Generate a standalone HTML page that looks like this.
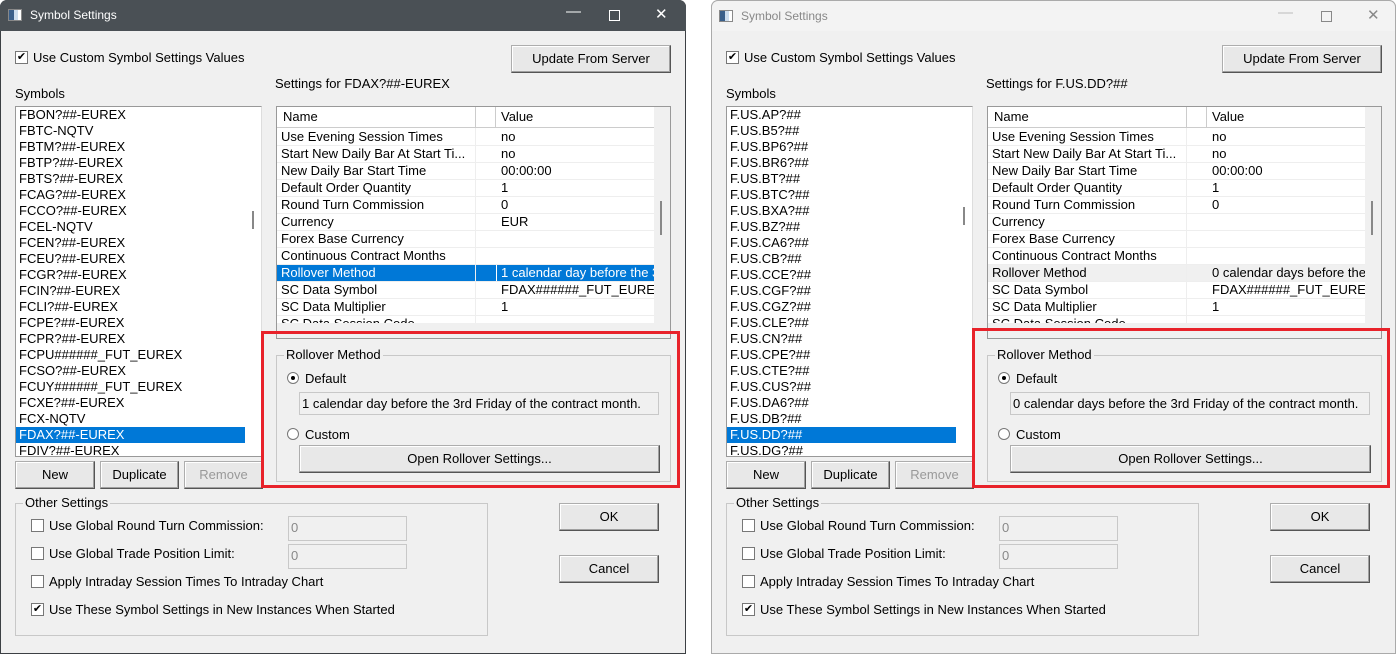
<!DOCTYPE html>
<html><head><meta charset="utf-8"><style>
*{box-sizing:border-box;margin:0;padding:0}
body{width:1396px;height:654px;background:#fff;position:relative;overflow:hidden;font-family:"Liberation Sans",Arial,sans-serif;font-size:13px;color:#000}
.win{position:absolute;top:0;height:654px;background:#f0f0f0;border-radius:7px 7px 0 0;overflow:hidden}
.w1{left:0;width:686px;box-shadow:inset 0 0 0 1px #3c4044}
.w2{left:711px;width:685px;box-shadow:inset 0 0 0 1px #aaa}
.a{position:absolute;white-space:nowrap}
.tb{position:absolute;left:0;top:0;right:0;height:31px}
.w1 .tb{background:#4a5055;color:#fff}
.w2 .tb{background:#f3f3f3;color:#888;border:1px solid #aaa;border-bottom:none;border-radius:7px 7px 0 0}
.tt{position:absolute;left:30px;top:8px;font-size:12px}
.ic{position:absolute;left:8px;top:9px;width:14px;height:12px;border:1px solid #888;background:linear-gradient(90deg,#3a5f8a 0 5px,#cde 5px 9px,#fff 9px)}
.ctl{position:absolute;top:5px;font-size:15px}
.cb{position:absolute;width:13px;height:13px;border:1px solid #777;background:#fff;font-size:11px;line-height:11px;text-align:center}
.btn{position:absolute;border:1px solid #adadad;border-right-color:#555;border-bottom-color:#555;background:#e8e8e8;text-align:center;box-shadow:inset -1px -1px 0 #a0a0a0,inset 1px 1px 0 #fff}
.list{position:absolute;left:15px;top:106px;width:247px;height:351px;background:#fff;border:1px solid #999;border-right-color:#ddd;overflow:hidden}
.list div{height:16px;line-height:16px;padding-left:3px;font-size:13px;white-space:nowrap}
.sel{background:#0078d7;color:#fff;width:229px}
.grid{position:absolute;left:276px;top:106px;width:395px;height:233px;border:1px solid #999;background:#f0f0f0;overflow:hidden}
.gin{position:absolute;left:0;top:0;width:377px;height:216px;background:#fff;overflow:hidden}
.row{position:absolute;left:0;width:377px;height:17px;line-height:16px;border-bottom:1px solid #eee;overflow:hidden;white-space:nowrap}
.row span{position:absolute;white-space:nowrap}
.hd{background:#fff;height:21px;line-height:20px;border-bottom:1px solid #ccc}
.grp{position:absolute;border:1px solid #c8c8c8}
.gl{position:absolute;top:-9px;left:7px;background:#f0f0f0;padding:0 2px}
.rad{position:absolute;width:12px;height:12px;border:1px solid #777;border-radius:50%;background:#fff}
.inp{position:absolute;border:1px solid #c8c8c8;background:#f0f0f0;color:#888;padding-left:2px;line-height:22px;white-space:nowrap;overflow:hidden}
.red{position:absolute;left:261px;top:331px;width:419px;height:157px;border:3px solid #e8222a}
</style></head><body>

<!-- LEFT WINDOW -->
<div class="win w1">
<div class="tb"><div class="ic"></div><div class="tt">Symbol Settings</div>
<div class="ctl" style="left:566px;top:3px">—</div><div class="ctl" style="left:609px;width:11px;height:11px;border:1px solid #fff;top:10px"></div><div class="ctl" style="left:655px">✕</div></div>
<div class="cb" style="left:15px;top:51px">✔</div><div class="a" style="left:33px;top:50px">Use Custom Symbol Settings Values</div>
<div class="btn" style="left:511px;top:45px;width:160px;height:28px;line-height:25px">Update From Server</div>
<div class="a" style="left:15px;top:86px">Symbols</div>
<div class="a" style="left:275px;top:76px">Settings for FDAX?##-EUREX</div>
<div class="list"><div>FBON?##-EUREX</div><div>FBTC-NQTV</div><div>FBTM?##-EUREX</div><div>FBTP?##-EUREX</div><div>FBTS?##-EUREX</div><div>FCAG?##-EUREX</div><div>FCCO?##-EUREX</div><div>FCEL-NQTV</div><div>FCEN?##-EUREX</div><div>FCEU?##-EUREX</div><div>FCGR?##-EUREX</div><div>FCIN?##-EUREX</div><div>FCLI?##-EUREX</div><div>FCPE?##-EUREX</div><div>FCPR?##-EUREX</div><div>FCPU######_FUT_EUREX</div><div>FCSO?##-EUREX</div><div>FCUY######_FUT_EUREX</div><div>FCXE?##-EUREX</div><div>FCX-NQTV</div><div class="sel">FDAX?##-EUREX</div><div>FDIV?##-EUREX</div>
<span style="position:absolute;left:236px;top:104px;width:2px;height:18px;background:#888"></span></div>
<div class="grid"><div class="gin">
<div class="row hd" style="top:0"><span style="left:6px">Name</span><span style="left:198px;top:0;height:20px;border-left:1px solid #ccc"></span><span style="left:218px;top:0;height:20px;border-left:1px solid #ccc"></span><span style="left:224px">Value</span></div>
<div class="row" style="top:22px"><span style="left:4px">Use Evening Session Times</span><span style="left:224px">no</span></div>
<div class="row" style="top:39px"><span style="left:4px">Start New Daily Bar At Start Ti...</span><span style="left:224px">no</span></div>
<div class="row" style="top:56px"><span style="left:4px">New Daily Bar Start Time</span><span style="left:224px">00:00:00</span></div>
<div class="row" style="top:73px"><span style="left:4px">Default Order Quantity</span><span style="left:224px">1</span></div>
<div class="row" style="top:90px"><span style="left:4px">Round Turn Commission</span><span style="left:224px">0</span></div>
<div class="row" style="top:107px"><span style="left:4px">Currency</span><span style="left:224px">EUR</span></div>
<div class="row" style="top:124px"><span style="left:4px">Forex Base Currency</span></div>
<div class="row" style="top:141px"><span style="left:4px">Continuous Contract Months</span></div>
<div class="row" style="top:158px;background:#0078d7;color:#fff"><span style="left:4px">Rollover Method</span><span style="left:219px;top:0;height:16px;border-left:1px solid #fff"></span><span style="left:224px">1 calendar day before the 3rd</span></div>
<div class="row" style="top:175px"><span style="left:4px">SC Data Symbol</span><span style="left:224px">FDAX######_FUT_EUREX</span></div>
<div class="row" style="top:192px"><span style="left:4px">SC Data Multiplier</span><span style="left:224px">1</span></div>
<div class="row" style="top:209px"><span style="left:4px">SC Data Session Code</span></div>
<span style="position:absolute;left:198px;top:21px;height:200px;border-left:1px solid #eee"></span>
</div><span style="position:absolute;left:383px;top:94px;width:2px;height:34px;background:#888"></span></div>
<div class="grp" style="left:276px;top:355px;width:395px;height:127px"><div class="gl">Rollover Method</div></div>
<div class="rad" style="left:287px;top:372px"><span style="position:absolute;left:3px;top:3px;width:4px;height:4px;border-radius:50%;background:#000"></span></div><div class="a" style="left:305px;top:371px">Default</div>
<div class="inp" style="left:299px;top:392px;width:360px;height:23px;color:#000">1 calendar day before the 3rd Friday of the contract month.</div>
<div class="rad" style="left:287px;top:428px"></div><div class="a" style="left:305px;top:427px">Custom</div>
<div class="btn" style="left:299px;top:445px;width:361px;height:28px;line-height:25px">Open Rollover Settings...</div>
<div class="btn" style="left:15px;top:461px;width:80px;height:28px;line-height:25px">New</div>
<div class="btn" style="left:100px;top:461px;width:79px;height:28px;line-height:25px">Duplicate</div>
<div class="btn" style="left:184px;top:461px;width:79px;height:28px;line-height:25px;color:#999">Remove</div>
<div class="grp" style="left:15px;top:503px;width:473px;height:133px"><div class="gl">Other Settings</div></div>
<div class="cb" style="left:31px;top:519px"></div><div class="a" style="left:49px;top:518px">Use Global Round Turn Commission:</div>
<div class="inp" style="left:288px;top:516px;width:119px;height:25px">0</div>
<div class="cb" style="left:31px;top:547px"></div><div class="a" style="left:49px;top:546px">Use Global Trade Position Limit:</div>
<div class="inp" style="left:288px;top:544px;width:119px;height:25px">0</div>
<div class="cb" style="left:31px;top:575px"></div><div class="a" style="left:49px;top:574px">Apply Intraday Session Times To Intraday Chart</div>
<div class="cb" style="left:31px;top:603px">✔</div><div class="a" style="left:49px;top:602px">Use These Symbol Settings in New Instances When Started</div>
<div class="btn" style="left:559px;top:503px;width:100px;height:28px;line-height:25px">OK</div>
<div class="btn" style="left:559px;top:555px;width:100px;height:28px;line-height:25px">Cancel</div>
</div>

<!-- RIGHT WINDOW -->
<div class="win w2">
<div class="tb"><div class="ic" style="left:7px"></div><div class="tt" style="left:29px">Symbol Settings</div>
<div class="ctl" style="left:566px;top:3px;color:#bbb">—</div><div class="ctl" style="left:609px;width:11px;height:11px;border:1px solid #888;top:10px"></div><div class="ctl" style="left:655px">✕</div></div>
<div class="cb" style="left:15px;top:51px">✔</div><div class="a" style="left:33px;top:50px">Use Custom Symbol Settings Values</div>
<div class="btn" style="left:511px;top:45px;width:160px;height:28px;line-height:25px">Update From Server</div>
<div class="a" style="left:15px;top:86px">Symbols</div>
<div class="a" style="left:275px;top:76px">Settings for F.US.DD?##</div>
<div class="list"><div>F.US.AP?##</div><div>F.US.B5?##</div><div>F.US.BP6?##</div><div>F.US.BR6?##</div><div>F.US.BT?##</div><div>F.US.BTC?##</div><div>F.US.BXA?##</div><div>F.US.BZ?##</div><div>F.US.CA6?##</div><div>F.US.CB?##</div><div>F.US.CCE?##</div><div>F.US.CGF?##</div><div>F.US.CGZ?##</div><div>F.US.CLE?##</div><div>F.US.CN?##</div><div>F.US.CPE?##</div><div>F.US.CTE?##</div><div>F.US.CUS?##</div><div>F.US.DA6?##</div><div>F.US.DB?##</div><div class="sel">F.US.DD?##</div><div>F.US.DG?##</div>
<span style="position:absolute;left:236px;top:100px;width:2px;height:18px;background:#888"></span></div>
<div class="grid"><div class="gin">
<div class="row hd" style="top:0"><span style="left:6px">Name</span><span style="left:198px;top:0;height:20px;border-left:1px solid #ccc"></span><span style="left:218px;top:0;height:20px;border-left:1px solid #ccc"></span><span style="left:224px">Value</span></div>
<div class="row" style="top:22px"><span style="left:4px">Use Evening Session Times</span><span style="left:224px">no</span></div>
<div class="row" style="top:39px"><span style="left:4px">Start New Daily Bar At Start Ti...</span><span style="left:224px">no</span></div>
<div class="row" style="top:56px"><span style="left:4px">New Daily Bar Start Time</span><span style="left:224px">00:00:00</span></div>
<div class="row" style="top:73px"><span style="left:4px">Default Order Quantity</span><span style="left:224px">1</span></div>
<div class="row" style="top:90px"><span style="left:4px">Round Turn Commission</span><span style="left:224px">0</span></div>
<div class="row" style="top:107px"><span style="left:4px">Currency</span></div>
<div class="row" style="top:124px"><span style="left:4px">Forex Base Currency</span></div>
<div class="row" style="top:141px"><span style="left:4px">Continuous Contract Months</span></div>
<div class="row" style="top:158px;background:#f0f0f0"><span style="left:4px">Rollover Method</span><span style="left:224px">0 calendar days before the 3rd</span></div>
<div class="row" style="top:175px"><span style="left:4px">SC Data Symbol</span><span style="left:224px">FDAX######_FUT_EUREX</span></div>
<div class="row" style="top:192px"><span style="left:4px">SC Data Multiplier</span><span style="left:224px">1</span></div>
<div class="row" style="top:209px"><span style="left:4px">SC Data Session Code</span></div>
<span style="position:absolute;left:198px;top:21px;height:200px;border-left:1px solid #eee"></span>
</div><span style="position:absolute;left:383px;top:94px;width:2px;height:34px;background:#888"></span>
<span style="position:absolute;left:18px;top:221px;width:306px;height:2px;background:#888"></span></div>
<div class="grp" style="left:276px;top:355px;width:395px;height:127px"><div class="gl">Rollover Method</div></div>
<div class="rad" style="left:287px;top:372px"><span style="position:absolute;left:3px;top:3px;width:4px;height:4px;border-radius:50%;background:#000"></span></div><div class="a" style="left:305px;top:371px">Default</div>
<div class="inp" style="left:299px;top:392px;width:360px;height:23px;color:#000">0 calendar days before the 3rd Friday of the contract month.</div>
<div class="rad" style="left:287px;top:428px"></div><div class="a" style="left:305px;top:427px">Custom</div>
<div class="btn" style="left:299px;top:445px;width:361px;height:28px;line-height:25px">Open Rollover Settings...</div>
<div class="btn" style="left:15px;top:461px;width:80px;height:28px;line-height:25px">New</div>
<div class="btn" style="left:100px;top:461px;width:79px;height:28px;line-height:25px">Duplicate</div>
<div class="btn" style="left:184px;top:461px;width:79px;height:28px;line-height:25px;color:#999">Remove</div>
<div class="grp" style="left:15px;top:503px;width:473px;height:133px"><div class="gl">Other Settings</div></div>
<div class="cb" style="left:31px;top:519px"></div><div class="a" style="left:49px;top:518px">Use Global Round Turn Commission:</div>
<div class="inp" style="left:288px;top:516px;width:119px;height:25px">0</div>
<div class="cb" style="left:31px;top:547px"></div><div class="a" style="left:49px;top:546px">Use Global Trade Position Limit:</div>
<div class="inp" style="left:288px;top:544px;width:119px;height:25px">0</div>
<div class="cb" style="left:31px;top:575px"></div><div class="a" style="left:49px;top:574px">Apply Intraday Session Times To Intraday Chart</div>
<div class="cb" style="left:31px;top:603px">✔</div><div class="a" style="left:49px;top:602px">Use These Symbol Settings in New Instances When Started</div>
<div class="btn" style="left:559px;top:503px;width:100px;height:28px;line-height:25px">OK</div>
<div class="btn" style="left:559px;top:555px;width:100px;height:28px;line-height:25px">Cancel</div>
</div>

<div class="red"></div>
<div class="red" style="left:972px;top:328px;width:418px;height:160px"></div>
</body></html>
